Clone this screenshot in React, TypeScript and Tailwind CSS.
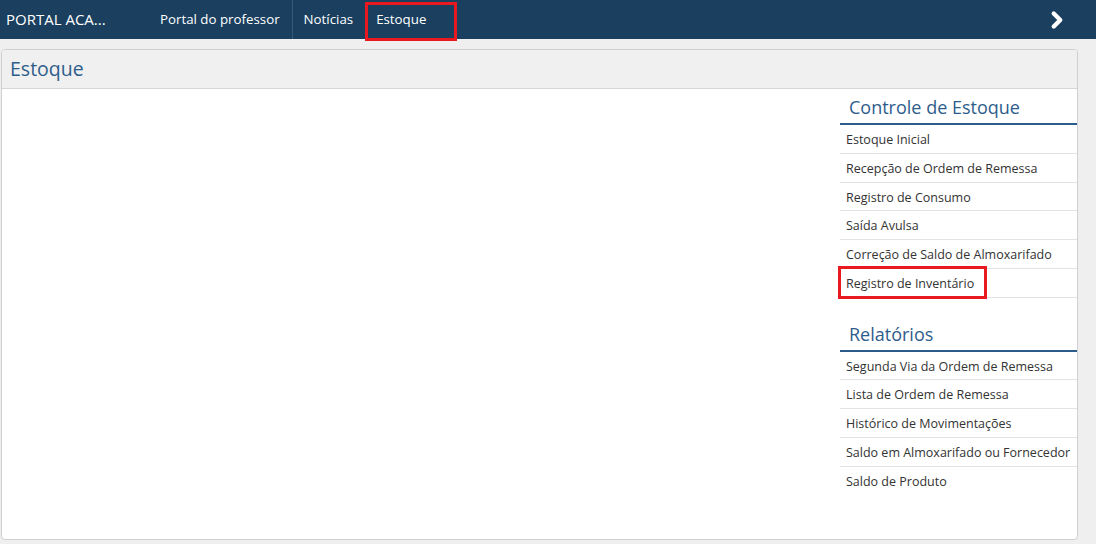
import { ChevronRight } from "lucide-react";

const controle = [
  "Estoque Inicial",
  "Recepção de Ordem de Remessa",
  "Registro de Consumo",
  "Saída Avulsa",
  "Correção de Saldo de Almoxarifado",
  "Registro de Inventário",
];

const relatorios = [
  "Segunda Via da Ordem de Remessa",
  "Lista de Ordem de Remessa",
  "Histórico de Movimentações",
  "Saldo em Almoxarifado ou Fornecedor",
  "Saldo de Produto",
];

function MenuSection({
  title,
  items,
  marked,
  lastBorder = true,
}: {
  title: string;
  items: string[];
  marked?: string;
  lastBorder?: boolean;
}) {
  return (
    <div>
      <h3 className="h-[36px] border-b-2 border-[#2b5b8b] pl-[9px] pt-[6px] text-[18px] leading-[24px] text-[#2e5d8c]">
        {title}
      </h3>
      <ul>
        {items.map((item, i) => (
          <li
            key={item}
            className={
              "relative flex h-[28.75px] items-center whitespace-nowrap pl-[6px] pt-[3px] text-[12.5px] text-[#333] " +
              (lastBorder || i < items.length - 1 ? "border-b border-[#e3e3e3]" : "")
            }
          >
            {item === marked && (
              <span
                aria-hidden
                className="pointer-events-none absolute -left-[2px] -top-[3px] h-[33px] w-[149px] border-[3px] border-[#e8191f]"
              />
            )}
            {item}
          </li>
        ))}
      </ul>
    </div>
  );
}

export default function App() {
  return (
    <div
      className="flex h-[544px] w-[1096px] flex-col overflow-hidden bg-[#efefef]"
      style={{ fontFamily: '"Open Sans", "Noto Sans", sans-serif' }}
    >
      {/* Barra superior */}
      <nav className="flex h-[39px] shrink-0 items-center bg-[#1a3f5f] text-white">
        <span className="w-[148px] pl-[6px] text-[15px]">PORTAL ACA...</span>
        <a className="flex h-full items-center border-r border-[#35597a] px-[12px] text-[13.3px]">
          Portal do professor
        </a>
        <a className="flex h-full items-center px-[11px] text-[13.3px]">Notícias</a>
        <a className="relative ml-[1px] flex h-full w-[92px] items-center pl-[11px] text-[13.3px]">
          <span
            aria-hidden
            className="pointer-events-none absolute left-0 top-[2px] h-[39px] w-[92px] border-[3px] border-[#e8191f]"
          />
          Estoque
        </a>
        <span className="ml-auto pr-[26px]">
          <ChevronRight className="h-[26px] w-[26px]" strokeWidth={4} />
        </span>
      </nav>

      {/* Conteúdo */}
      <main className="flex-1 pb-[4px] pl-[1px] pr-[18px] pt-[10px]">
        <section className="flex h-full flex-col overflow-hidden rounded-[4px] border border-[#cfcfcf] bg-white">
          <header className="flex h-[39px] items-center border-b border-[#d6d6d6] bg-[#f0f0f0] pl-[8px]">
            <h2 className="text-[19.5px] text-[#2e5d8c]">Estoque</h2>
          </header>
          <div className="flex flex-1">
            <div className="flex-1" />
            <aside className="w-[237px]">
              <MenuSection title="Controle de Estoque" items={controle} marked="Registro de Inventário" />
              <div className="mt-[18px]">
                <MenuSection title="Relatórios" items={relatorios} lastBorder={false} />
              </div>
            </aside>
          </div>
        </section>
      </main>
    </div>
  );
}
